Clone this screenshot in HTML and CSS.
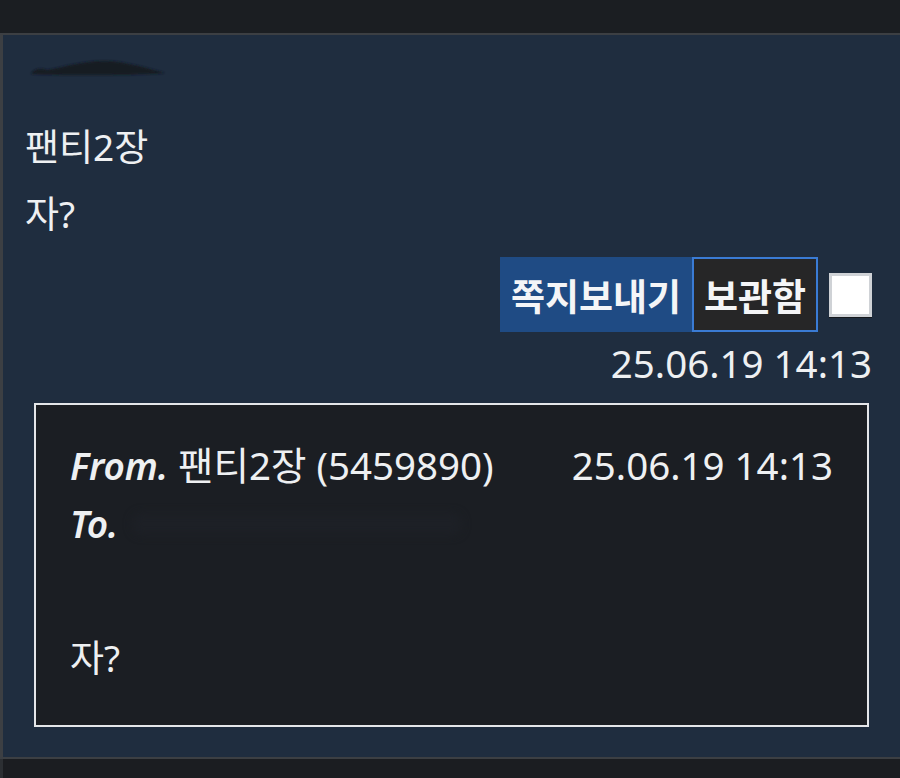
FILE: index.html
```html
<!DOCTYPE html>
<html lang="ko">
<head>
<meta charset="utf-8">
<title>쪽지</title>
<link rel="stylesheet" href="styles.css">
</head>
<body>
<div class="topbar"></div>
<div class="panel">
  <div class="name-blob">
    <svg width="150" height="24" viewBox="0 0 150 24">
      <defs><filter id="b"><feGaussianBlur stdDeviation="1.2"/></filter></defs>
      <path d="M4 16 C8 10 14 10 20 12 C40 8 60 2 80 3 C100 4 120 10 138 15 C120 17 40 18 4 16 Z" fill="#141a22" filter="url(#b)"/>
    </svg>
  </div>
  <div class="msg-title">팬티2장</div>
  <div class="msg-body">자?</div>
  <div class="actions">
    <button class="btn btn-send">쪽지보내기</button>
    <button class="btn btn-keep">보관함</button>
    <span class="check"></span>
  </div>
  <div class="date-row">25.06.19 14:13</div>
  <div class="letter">
    <div class="letter-head">
      <div class="from"><b class="label">From.</b> 팬티2장 (5459890)</div>
      <div class="letter-date">25.06.19 14:13</div>
    </div>
    <div class="to"><b class="label">To.</b><span class="to-blur"></span></div>
    <div class="letter-body">자?</div>
  </div>
</div>
<div class="bottombar"></div>
</body>
</html>
```
FILE: styles.css
```css
* { box-sizing: border-box; }
html, body { margin: 0; padding: 0; }
body {
  width: 900px;
  height: 778px;
  overflow: hidden;
  background: #1b1e22;
  color: #eef0f2;
  font-family: "Noto Sans", "Noto Sans CJK KR", sans-serif;
  font-size: 37px;
}
.topbar { height: 33px; background: #1b1e22; }
.panel {
  background: #1f2d3f;
  border-top: 2px solid #3c3f43;
  border-left: 3px solid #3c3f43;
  border-bottom: 2px solid #3c3f43;
  padding: 23px 26px 30px 22px;
  width: 904px;
}
.name-blob { height: 24px; margin-left: 2px; }
.name-blob svg { display: block; }
.msg-title { margin-top: 40px; line-height: 50px; }
.msg-body { margin-top: 17px; line-height: 50px; }
.actions {
  margin-top: 18px;
  height: 75px;
  display: flex;
  justify-content: flex-end;
  align-items: center;
  padding-right: 6px;
}
.btn {
  font-family: "Noto Sans", "Noto Sans CJK KR", sans-serif;
  font-weight: 700;
  font-size: 37px;
  color: #f4f5f7;
  height: 75px;
  border: none;
  padding: 0;
  margin: 0;
}
.btn-send { background: #1f4b84; width: 192px; }
.btn-keep { background: #262627; border: 2px solid #3a7bd4; width: 126px; }
.check {
  width: 43px;
  height: 44px;
  margin-left: 11px;
  background: #fff;
  border: 3px solid #cfd2d6;
  box-shadow: 0 1px 0 #15181c;
}
.date-row {
  margin-top: 6px;
  line-height: 50px;
  text-align: right;
  font-size: 38.5px;
  padding-right: 6px;
}
.letter {
  margin: 15px 9px 0 9px;
  height: 324px;
  background: #1b1e23;
  border: 2px solid #e4e6e9;
  padding: 31px 34px 0 34px;
}
.letter-head {
  display: flex;
  justify-content: space-between;
  align-items: baseline;
  line-height: 58px;
  font-size: 38.5px;
}
.letter-date { font-size: 38.5px; }
.label { font-style: italic; font-weight: 600; font-size: 37px; }
.to { line-height: 58px; display: flex; align-items: center; }
.to-blur {
  display: inline-block;
  width: 330px;
  height: 22px;
  margin-left: 14px;
  background: #1d2026;
  border-radius: 10px;
  filter: blur(4px);
}
.letter-body { margin-top: 80px; line-height: 50px; }
.bottombar {
  height: 40px;
  border-left: 3px solid #2c2f33;
  background: #1b1d21;
}
```
